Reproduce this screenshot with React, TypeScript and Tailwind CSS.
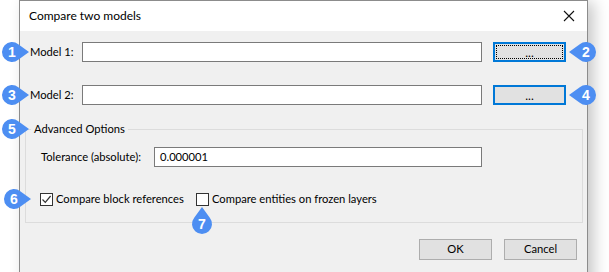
import React from "react";

const font = { fontFamily: 'Lato, "Liberation Sans", Arial, sans-serif' };

type Dir = "left" | "right" | "up";

// numbered callouts over the dialog
const MARKERS: { n: number; cx: number; cy: number; dir: Dir }[] = [
  { n: 1, cx: 12, cy: 52, dir: "right" },
  { n: 2, cx: 586, cy: 52, dir: "left" },
  { n: 3, cx: 12, cy: 95, dir: "right" },
  { n: 4, cx: 586, cy: 95, dir: "left" },
  { n: 5, cx: 12, cy: 129, dir: "right" },
  { n: 6, cx: 14, cy: 199, dir: "right" },
  { n: 7, cx: 202, cy: 224, dir: "up" },
];

function markerPath(cx: number, cy: number, dir: Dir) {
  const r = 10;
  const a = 6.25;
  const b = 7.8;
  if (dir === "right")
    return `M${cx + 17} ${cy} L${cx + a} ${cy - b} A${r} ${r} 0 1 0 ${cx + a} ${cy + b} Z`;
  if (dir === "left")
    return `M${cx - 17} ${cy} L${cx - a} ${cy + b} A${r} ${r} 0 1 0 ${cx - a} ${cy - b} Z`;
  return `M${cx} ${cy - 17} L${cx + b} ${cy - a} A${r} ${r} 0 1 1 ${cx - b} ${cy - a} Z`;
}

function Checkbox({ checked }: { checked?: boolean }) {
  return (
    <span className="grid h-[13px] w-[13px] shrink-0 place-items-center border border-[#333] bg-white">
      {checked && (
        <svg width="11" height="11" viewBox="0 0 11 11">
          <path d="M1.5 5.5 L4.3 8.4 L9.6 2" fill="none" stroke="#333" strokeWidth="1.2" />
        </svg>
      )}
    </span>
  );
}

function BrowseButton({ focused }: { focused?: boolean }) {
  return (
    <button className="relative h-[20px] w-[73px] border-2 border-[#0078d7] bg-[#e1e1e1] text-[12px] leading-none text-black">
      {focused && <span className="absolute inset-[1px] border border-dotted border-black" />}
      <span className="relative top-[1px]">...</span>
    </button>
  );
}

export default function App() {
  return (
    <div className="relative h-[272px] w-[609px] overflow-hidden bg-white text-[11.2px] text-black" style={font}>
      <div className="ml-[19px] h-[300px] w-[569px] border border-[#8c8c8c] bg-[#f0f0f0] shadow-[6px_2px_14px_rgba(0,0,0,0.22)]">
        {/* title bar */}
        <div className="flex h-[30px] items-center justify-between bg-white pl-[9px] pr-[9px]">
          <span className="text-[12px]">Compare two models</span>
          <svg width="12" height="12" viewBox="0 0 12 12" className="mr-[3px]">
            <path d="M1 1 L11 11 M11 1 L1 11" stroke="#111" strokeWidth="1.1" />
          </svg>
        </div>

        {/* model rows */}
        <div className="flex flex-col gap-[23px] pt-[11px]">
          {[1, 2].map((n) => (
            <div key={n} className="flex h-[20px] items-center pl-[10px]">
              <span className="w-[52px]">Model {n}:</span>
              <div className="h-[20px] w-[400px] border border-[#7a7a7a] bg-white" />
              <div className="ml-[11px]">
                <BrowseButton focused={n === 1} />
              </div>
            </div>
          ))}
        </div>

        {/* advanced options */}
        <fieldset className="ml-[5px] mr-[4px] mt-[17px] border border-[#dcdcdc] pb-[16px]">
          <legend className="ml-[5px] px-[3px] leading-[14px]">Advanced Options</legend>
          <div className="mt-[11px] flex h-[20px] items-center pl-[15px]">
            <span className="w-[113px]">Tolerance (absolute):</span>
            <div className="flex h-[20px] w-[328px] items-center border border-[#7a7a7a] bg-white pl-[5px]">
              0.000001
            </div>
          </div>
          <div className="mt-[26px] flex h-[13px] items-center pl-[14px]">
            <Checkbox checked />
            <span className="ml-[3px] w-[140px]">Compare block references</span>
            <Checkbox />
            <span className="ml-[3px]">Compare entities on frozen layers</span>
          </div>
        </fieldset>

        {/* footer */}
        <div className="mt-[16px] flex justify-end gap-[12px] pr-[10px]">
          <button className="h-[21px] w-[73px] border border-[#adadad] bg-[#e1e1e1]">OK</button>
          <button className="h-[21px] w-[73px] border border-[#adadad] bg-[#e1e1e1]">Cancel</button>
        </div>
      </div>

      <svg className="pointer-events-none absolute inset-0" width="609" height="272">
        {MARKERS.map((m) => (
          <g key={m.n}>
            <path d={markerPath(m.cx, m.cy, m.dir)} fill="#4d8ef2" />
            <text
              x={m.cx}
              y={m.cy + 5}
              textAnchor="middle"
              fill="#fff"
              fontSize="14"
              fontWeight="bold"
              fontFamily='"Liberation Sans", Arial, sans-serif'
            >
              {m.n}
            </text>
          </g>
        ))}
      </svg>
    </div>
  );
}
